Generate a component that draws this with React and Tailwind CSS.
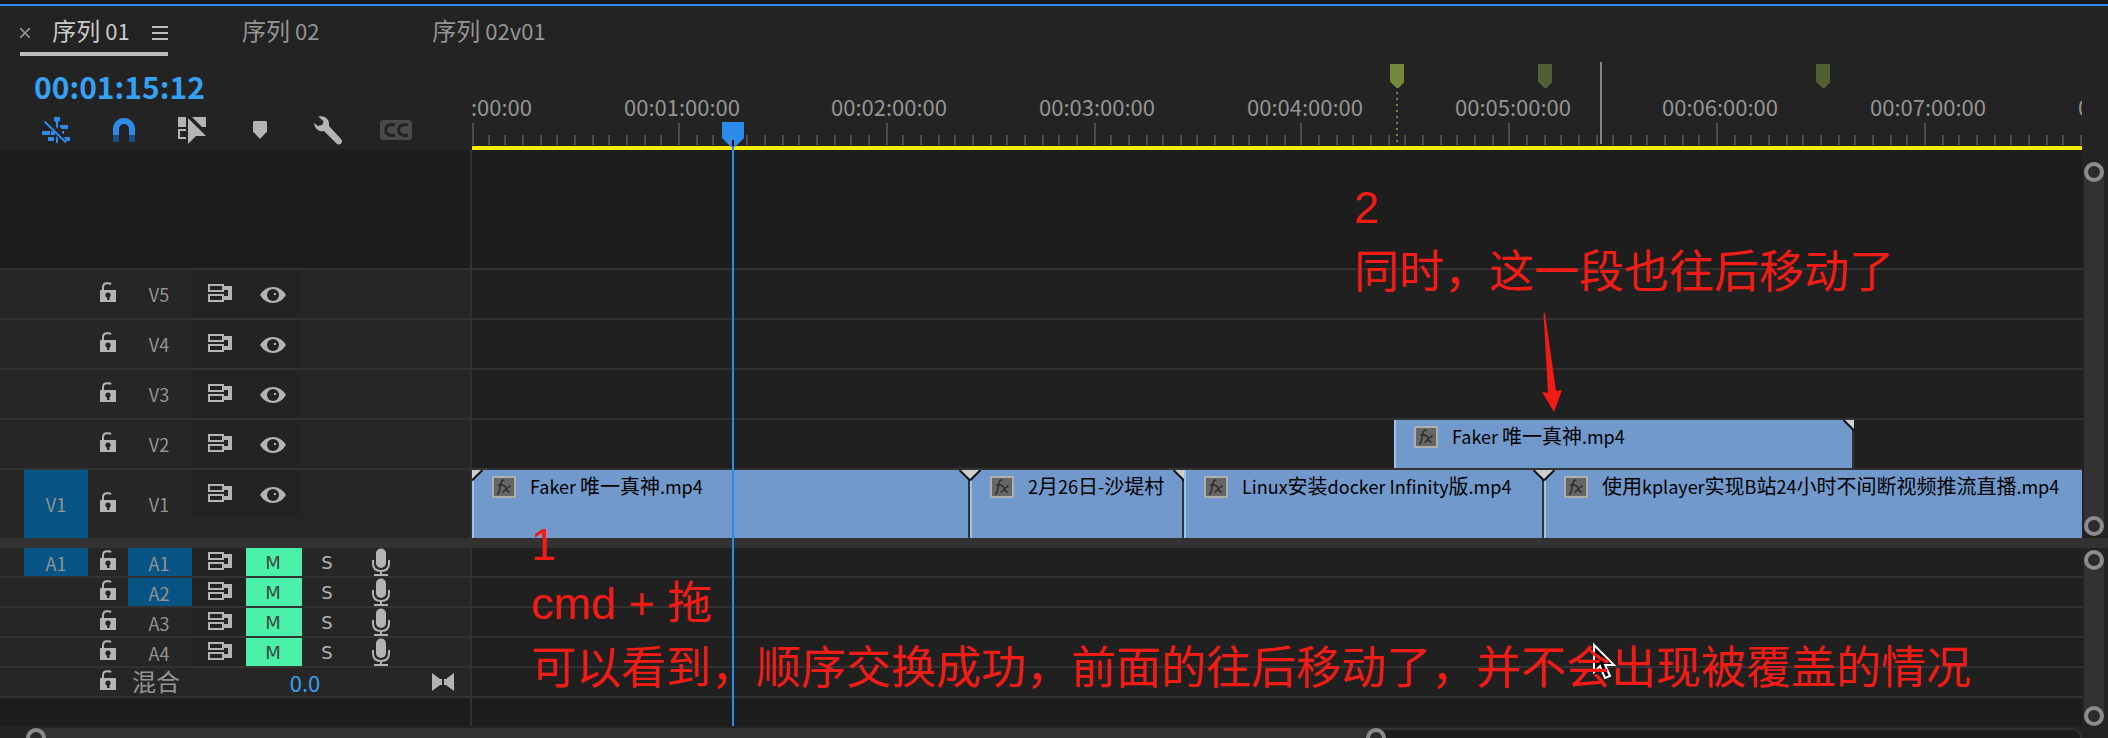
import React from "react";

const MINUTE = 207.7;
const RULER_ORIGIN = -1;
const LABELS = [0, 1, 2, 3, 4, 5, 6, 7, 8];
const TICKS = Array.from({ length: 168 }, (_, i) => i);

const CJK = /([\u3000-\u9fff\uff00-\uffef]+)/;

/* Renders Chinese runs one step larger than the Latin runs beside them. */
function Mixed({ text, cjk, latin }) {
  return (
    <span className="whitespace-pre">
      {text.split(CJK).map((run, i) =>
        run ? (
          <span key={i} className={i % 2 ? cjk : latin}>
            {run}
          </span>
        ) : null
      )}
    </span>
  );
}

function LockIcon() {
  return (
    <svg width="16" height="20" viewBox="0 0 16 20" fill="none">
      <path d="M3 9V5.5Q3 1.2 7 1.2H8.5Q10 1.2 11 2.2" stroke="#b4b4b4" strokeWidth="2" />
      <rect y="8" width="16" height="12" rx="0.5" fill="#b4b4b4" />
      <circle cx="8" cy="13" r="2.6" fill="#232323" />
      <path d="M7 14h2.4v4H7z" fill="#232323" />
    </svg>
  );
}

function SyncIcon() {
  return (
    <svg width="24" height="18" viewBox="0 0 24 18" fill="none">
      <path d="M1 1h14v6H1zM1 11h14v6H1z" stroke="#b4b4b4" strokeWidth="2" />
      <path d="M16 2h8v14h-8v-4h4V6h-4z" fill="#b4b4b4" />
    </svg>
  );
}

function EyeIcon() {
  return (
    <svg width="26" height="16" viewBox="0 0 26 16">
      <path d="M0 8Q5 0 13 0t13 8q-5 8-13 8T0 8z" fill="#b4b4b4" />
      <circle cx="13" cy="8" r="6" fill="#232323" />
      <rect x="14" y="6" width="2" height="2" fill="#b4b4b4" />
    </svg>
  );
}

function MicIcon() {
  return (
    <svg width="18" height="28" viewBox="0 0 18 28" fill="none">
      <rect x="4" y="0.5" width="10" height="19.5" rx="5" fill="#b4b4b4" />
      <path d="M1 12v3.5Q1 23 9 23t8-7.500V12M9 23v4M2 27h14" stroke="#b4b4b4" strokeWidth="2" />
    </svg>
  );
}

function LinkedIcon() {
  return (
    <svg width="28" height="27" viewBox="0 0 28 27" fill="#2d8ceb">
      <path d="M12 0h6v4l-2 1v7l-2-2V5l-2-1zM18 8h8v4h-6l-2-2zM0 14h8v4H0zM9 14h4v4H9zM6 20h6v4H6zM14 19l2 2v5h-2zM20 14h2v3l-2-1zM22 20h6v4h-4z" />
      <path d="M2.500 4.500L24 25.500" stroke="#2d8ceb" strokeWidth="2" />
    </svg>
  );
}

function MagnetIcon() {
  return (
    <svg width="22" height="24" viewBox="0 0 22 24">
      <path d="M0 17v-6a11 11 0 0 1 22 0v6h-6v-6a5 5 0 0 0-10 0v6z" fill="#2d8ceb" />
      <path d="M0 17h6v7H0zM16 17h6v7h-6z" fill="#1a4f82" />
    </svg>
  );
}

function InsertIcon() {
  return (
    <svg width="28" height="27" viewBox="0 0 28 27" fill="#b4b4b4">
      <path d="M0 0h8v10H0zM14 0h14v10h-4z" />
      <path d="M8 13H1v8h7" fill="none" stroke="#b4b4b4" strokeWidth="2" />
      <path d="M10 1l18 18h-10l-8 8z" />
    </svg>
  );
}

function WrenchIcon() {
  return (
    <svg width="28" height="29" viewBox="0 0 28 29" fill="#b4b4b4">
      <path d="M4 0.500Q11-1 14 4q1.500 2.800 1 6L27 23q2 2.500 0 4.500t-4.500 0L10 15Q4 16 1.500 11.500 0 9.500 0 7l4 3 4.500-1.200L9.500 5z" />
    </svg>
  );
}

function Tools() {
  const tool = "flex h-9 w-[68px] items-center justify-center";
  return (
    <div className="flex">
      <button aria-label="嵌套" className={tool}><LinkedIcon /></button>
      <button aria-label="对齐" className={tool}><MagnetIcon /></button>
      <button aria-label="链接选择" className={tool}><InsertIcon /></button>
      <button aria-label="添加标记" className={tool}>
        <svg width="14" height="18" viewBox="0 0 14 18" fill="#b4b4b4">
          <path d="M1 0h12l1 1v9.500L7 18 0 10.500V1z" />
        </svg>
      </button>
      <button aria-label="设置" className={tool}><WrenchIcon /></button>
      <button aria-label="字幕" className={tool}>
        <svg width="32" height="20" viewBox="0 0 32 20" fill="none">
          <rect width="32" height="20" rx="3.500" fill="#4a4a4a" />
          <path d="M15 5Q13.500 4.500 11.500 4.500 5.700 5 5.700 10t5.800 5.500q2 0 3.500-.5M28 5Q26.500 4.500 24.500 4.500 18.700 5 18.700 10t5.800 5.500q2 0 3.500-.5" stroke="#232323" strokeWidth="3" />
        </svg>
      </button>
    </div>
  );
}

function Tab({ label, active }) {
  return (
    <a href="#" className={active ? "text-[#cacaca]" : "text-[#949494]"}>
      <Mixed text={label} cjk="text-2xl/10" latin="text-[22px]/10" />
    </a>
  );
}

function Tabs() {
  return (
    <nav className="flex h-[50px] items-start pl-5">
      <div className="flex h-[50px] w-[148px] items-start justify-between border-b-4 border-[#bdbdbd] pt-1">
        <button aria-label="关闭" className="pt-[18px]">
          <svg className="block" width="10" height="10" viewBox="0 0 10 10" stroke="#949494" strokeWidth="1.600">
            <path d="M0 0l10 10M10 0L0 10" />
          </svg>
        </button>
        <Tab label="序列 01" active />
        <button aria-label="菜单" className="pt-4">
          <svg className="block" width="16" height="14" viewBox="0 0 16 14" fill="#bdbdbd">
            <path d="M0 0h16v2H0zM0 6h16v2H0zM0 12h16v2H0z" />
          </svg>
        </button>
      </div>
      <div className="flex gap-[113px] pt-1 pl-[74px]">
        <Tab label="序列 02" />
        <Tab label="序列 02v01" />
      </div>
    </nav>
  );
}

function Marker({ className, color }) {
  return (
    <svg className={className} width="14" height="24" viewBox="0 0 14 24" fill={color} shapeRendering="crispEdges">
      <path d="M0 0h14v18L8 24H6L0 18z" />
    </svg>
  );
}

function Ruler() {
  return (
    <div className="relative h-full flex-1 overflow-hidden border-b-4 border-[#f3ee00]">
      {LABELS.map((m) => (
        <span
          key={m}
          className="absolute top-[34px] w-40 -translate-x-1/2 text-center text-[22px]/8 text-[#949494]"
          style={{ left: Math.round(RULER_ORIGIN + m * MINUTE) + 3 }}
        >
          {`00:0${m}:00:00`}
        </span>
      ))}
      <svg className="absolute top-[67px] left-0" width="3000" height="22" fill="#4d4d4d" shapeRendering="crispEdges">
        {TICKS.map((i) => {
          const major = i % 12 === 0;
          return (
            <rect
              key={i}
              x={Math.max(0, 2 * Math.round((RULER_ORIGIN + (i * MINUTE) / 12 - 1) / 2))}
              y={major ? 0 : 12}
              width="2"
              height={major ? 22 : 10}
            />
          );
        })}
      </svg>
      <Marker className="absolute top-2 left-[918px]" color="#71883a" />
      <Marker className="absolute top-2 left-[1066px]" color="#525f32" />
      <Marker className="absolute top-2 left-[1344px]" color="#525f32" />
      <svg className="absolute top-8 left-[924px]" width="2" height="56">
        <path d="M1 4V56" stroke="#71883a" strokeWidth="2" strokeDasharray="2 4" />
      </svg>
      <div className="absolute top-1.5 left-[1128px] h-[82px] w-0.5 bg-[#858585]" />
    </div>
  );
}

const HEAD_GRID = "grid h-full w-[470px] grid-cols-[64px_40px_64px_54px_56px_50px_58px] bg-[#262626] pl-6 text-lg/6 text-[#949494]";
const CELL = "flex items-center justify-center";

function VideoHead({ name, source }) {
  return (
    <div className={HEAD_GRID}>
      <button aria-label={`源 ${name}`} className={source ? `${CELL} bg-[#085484]` : CELL}>{source}</button>
      <button aria-label="锁定" className={`${CELL} pb-1`}><LockIcon /></button>
      <button className={`${CELL} pr-0.5`}>{name}</button>
      <button aria-label="同步锁定" className="flex h-12 items-center justify-center bg-[#232323] pb-0.5 pl-0.5"><SyncIcon /></button>
      <button aria-label="切换轨道输出" className="flex h-12 items-center justify-center bg-[#232323] pt-0.5 pr-0.5"><EyeIcon /></button>
    </div>
  );
}

function AudioHead({ name, source, target }) {
  return (
    <div className={HEAD_GRID}>
      <button aria-label={`源 ${name}`} className={source ? `${CELL} bg-[#085484] pt-0.5` : CELL}>{source}</button>
      <button aria-label="锁定" className={`${CELL} pb-1`}><LockIcon /></button>
      <button className={target ? `${CELL} bg-[#085484] pt-0.5 pr-0.5` : `${CELL} pt-0.5 pr-0.5`}>{name}</button>
      <button aria-label="同步锁定" className={`${CELL} bg-[#232323] pb-0.5 pl-0.5`}><SyncIcon /></button>
      <button className={`${CELL} bg-[#4bf0a9] pt-0.5 pr-0.5 font-['DejaVu_Sans'] text-[#3d4a44]`}>M</button>
      <button className={`${CELL} pt-0.5 font-['DejaVu_Sans'] text-[#b4b4b4]`}>S</button>
      <button aria-label="画外音" className={CELL}><MicIcon /></button>
    </div>
  );
}

function Corner({ side }) {
  return side === "left" ? (
    <svg className="absolute top-0 -left-0.5" width="11" height="11" viewBox="0 0 11 11">
      <path d="M0 0h10L0 10z" fill="#cfcfcf" />
      <path d="M10.500 0L0 10.500" stroke="#111" strokeWidth="2" />
    </svg>
  ) : (
    <svg className="absolute top-0 -right-0.5" width="11" height="11" viewBox="0 0 11 11">
      <path d="M1 0h10v10z" fill="#cfcfcf" />
      <path d="M0.500 0L11 10.500" stroke="#111" strokeWidth="2" />
    </svg>
  );
}

function Clip({ name, className, start, end }) {
  return (
    <div className={`relative flex items-start gap-3.5 border-l-2 border-r-[#333] border-l-[#a3bfe4] bg-[#7299cc] pt-1.5 pl-[18px] ${end ? "border-r-2" : ""} ${className}`}>
      {start && <Corner side="left" />}
      {end && <Corner side="right" />}
      <span className="flex h-[22px] w-6 shrink-0 items-center justify-center border-2 border-[#b0b0b0] bg-[#666]">
        <svg width="16" height="16" viewBox="0 0 16 16" fill="none" stroke="#2e2e2e" strokeWidth="1.500">
          <path d="M8.500 1.500Q6-.2 5 4L3 13q-.5 2-2 2M2 6h5M6.500 6.500Q9 6 10 9t3.500 4.500M14.500 6.500L6.500 13.500" />
        </svg>
      </span>
      <span className="-mt-0.5 text-black">
        <Mixed text={name} cjk="text-xl/6" latin="text-lg/6" />
      </span>
    </div>
  );
}

function Track({ className, head, children }) {
  return (
    <div className={`flex border-b-2 border-[#323232] bg-[#202020] ${className}`}>
      {head}
      <div className="flex flex-1 border-l-2 border-[#323232]">{children}</div>
    </div>
  );
}

function Knob() {
  return <span className="size-5 shrink-0 rounded-full border-4 border-[#8c8c8c] bg-[#2b2b2b]" />;
}

function VerticalZoom({ className }) {
  return (
    <div className={`flex w-[26px] shrink-0 flex-col items-center bg-[#232323] pr-0.5 ${className}`}>
      <div className="flex min-h-0 w-5 flex-1 flex-col justify-between rounded-full bg-[#323232]">
        <Knob />
        <Knob />
      </div>
    </div>
  );
}

function Blank({ className }) {
  return (
    <div className={`flex bg-[#1d1d1d] ${className}`}>
      <div className="w-[470px]" />
      <div className="flex-1 border-l-2 border-[#323232]" />
    </div>
  );
}

export default function App() {
  return (
    <div lang="zh-CN" className="relative flex h-screen flex-col overflow-hidden bg-[#232323] font-['Noto_Sans_CJK_SC',sans-serif]">
      <div className="h-1.5 shrink-0 border-b-2 border-[#2d8ceb] bg-[#191919]" />
      <Tabs />
      <div className="flex h-[94px] shrink-0 pr-[26px]">
        <div className="w-[472px] shrink-0 pl-[22px]">
          <div className="pt-2.5 pl-3 text-3xl/10 font-bold text-[#36a0f2]">00:01:15:12</div>
          <div className="pt-1.5">
            <Tools />
          </div>
        </div>
        <Ruler />
      </div>

      <main className="relative shrink-0">
        <section className="flex">
          <div className="min-w-0 flex-1">
            <Blank className="h-[120px] border-b-2 border-[#323232]" />
            <Track className="h-[50px]" head={<VideoHead name="V5" />} />
            <Track className="h-[50px]" head={<VideoHead name="V4" />} />
            <Track className="h-[50px]" head={<VideoHead name="V3" />} />
            <Track className="h-[50px]" head={<VideoHead name="V2" />}>
              <Clip name="Faker 唯一真神.mp4" className="ml-[922px] w-[460px]" end />
            </Track>
            <div className="flex h-[68px]">
              <VideoHead name="V1" source="V1" />
              <div className="flex min-w-0 flex-1 border-l-2 border-[#323232]">
                <Clip name="Faker 唯一真神.mp4" className="w-[498px] shrink-0" start end />
                <Clip name="2月26日-沙堤村" className="w-[214px] shrink-0" start end />
                <Clip name="Linux安装docker Infinity版.mp4" className="w-[360px] shrink-0" end />
                <Clip name="使用kplayer实现B站24小时不间断视频推流直播.mp4" className="flex-1" start />
              </div>
            </div>
          </div>
          <VerticalZoom className="pt-3 pb-0.5" />
        </section>

        <div className="h-2.5 bg-[#323232]" />

        <section className="flex">
          <div className="min-w-0 flex-1">
            <Track className="h-[30px]" head={<AudioHead name="A1" source="A1" target />} />
            <Track className="h-[30px]" head={<AudioHead name="A2" target />} />
            <Track className="h-[30px]" head={<AudioHead name="A3" />} />
            <Track className="h-[30px]" head={<AudioHead name="A4" />} />
            <Track
              className="h-[30px]"
              head={
                <div className="flex w-[470px] items-center bg-[#262626] pr-4 pl-[100px] text-[#949494]">
                  <button aria-label="锁定" className="pb-1"><LockIcon /></button>
                  <span className="pb-0.5 pl-4 text-2xl/6">混合</span>
                  <button className="mr-0.5 ml-auto text-[22px]/6 text-[#36a0f2]">0.0</button>
                  <button aria-label="显示关键帧" className="ml-auto">
                    <svg width="22" height="18" viewBox="0 0 22 18" fill="#b4b4b4">
                      <path d="M0 0l8 6h2v6H8l-8 6zM22 0l-8 6h-2v6h2l8 6z" />
                    </svg>
                  </button>
                </div>
              }
            />
            <Blank className="h-7" />
          </div>
          <VerticalZoom className="pt-0.5" />
        </section>

        <svg className="absolute -top-7 left-[722px]" width="22" height="26" viewBox="0 0 22 26">
          <path d="M0 0h22v16L13 25H9L0 16z" fill="#2d8ceb" />
          <path d="M10 18h2v7h-2z" fill="#000" />
        </svg>
        <div className="absolute -top-1 bottom-0 left-[732px] w-0.5 bg-[#2d8ceb]" />

        <svg className="absolute top-[491px] left-[1591px]" width="28" height="42" viewBox="0 0 28 42">
          <path d="M3 4v27l6-6 5 12 5-2-5-11h9z" fill="#000" stroke="#fff" strokeWidth="2" />
        </svg>

        <svg className="absolute top-[162px] left-[1540px]" width="24" height="101" viewBox="0 0 24 101" fill="#f21c16">
          <path d="M3.500 1L5 1l11 78 6-1-8 22L2 80l6 1z" />
        </svg>
        <div className="absolute top-6 left-[1354px] font-['Liberation_Sans','Noto_Sans_CJK_SC',sans-serif] text-[45px] whitespace-nowrap text-[#f21c16]">
          <p className="leading-[67px]">2</p>
          <p className="leading-[63px]">同时，这一段也往后移动了</p>
        </div>
        <div className="absolute top-[368px] left-[531px] font-['Liberation_Sans','Noto_Sans_CJK_SC',sans-serif] text-[45px] whitespace-nowrap text-[#f21c16]">
          <p className="leading-[54px]">1</p>
          <p className="leading-[63px]">cmd + 拖</p>
          <p className="leading-[67px]">可以看到，顺序交换成功，前面的往后移动了，并不会出现被覆盖的情况</p>
        </div>
      </main>

      <div className="flex shrink-0 pt-0.5 pr-[26px] pl-[26px]">
        <div className="flex h-5 flex-1 rounded-full border-2 border-[#323232] bg-[#1d1d1d]">
          <div className="-my-0.5 -ml-0.5 flex h-5 w-[1360px] justify-between rounded-full bg-[#323232]">
            <Knob />
            <Knob />
          </div>
        </div>
      </div>
    </div>
  );
}
